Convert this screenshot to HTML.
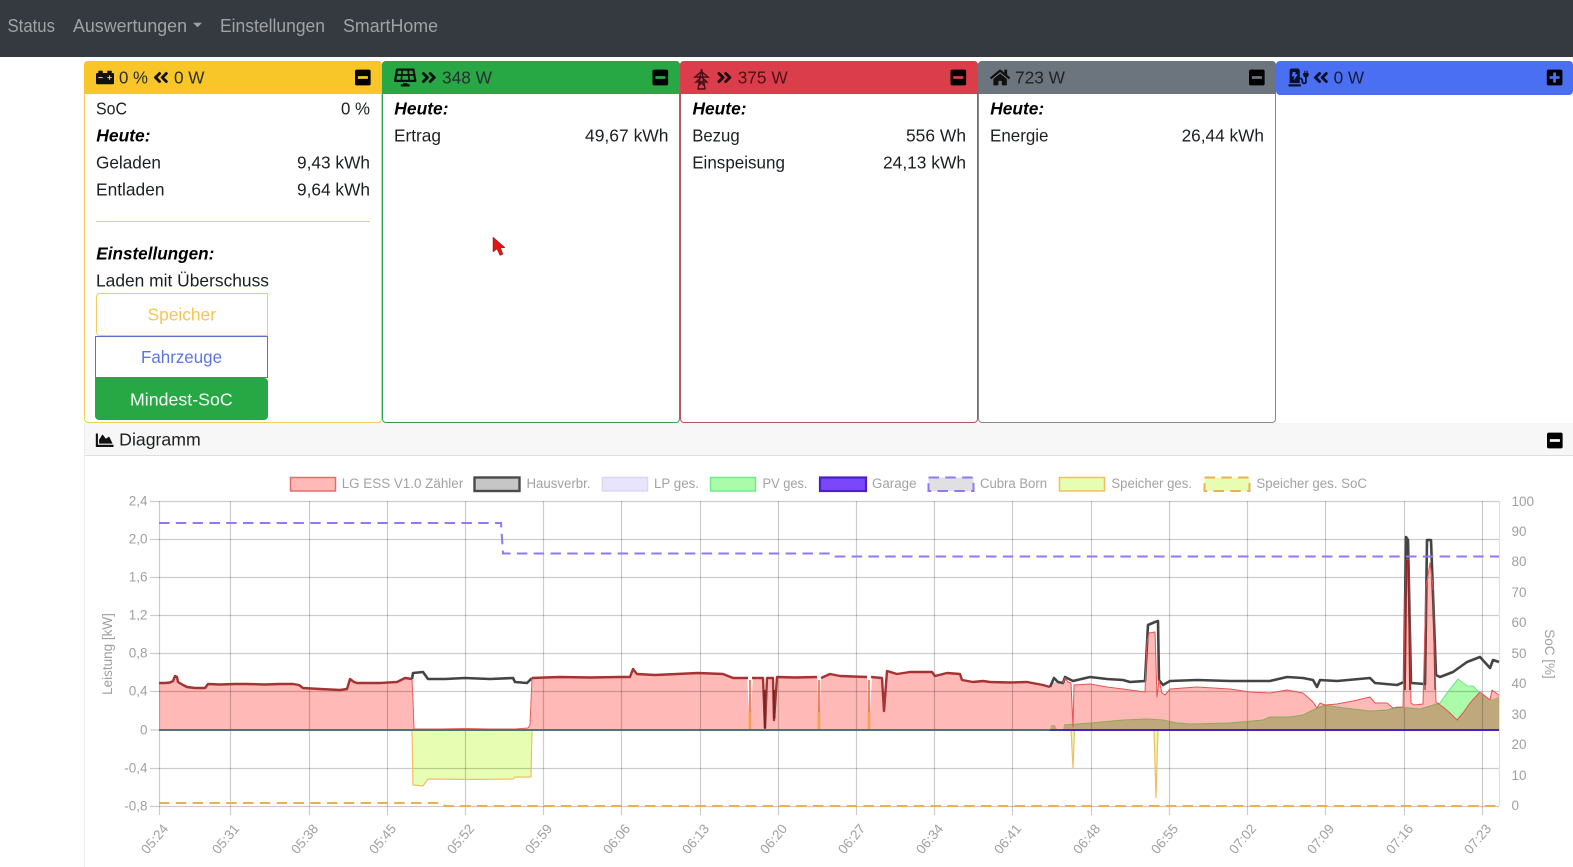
<!DOCTYPE html>
<html lang="de"><head><meta charset="utf-8"><title>openWB</title>
<style>
html,body{margin:0;padding:0;background:#fff;width:1573px;height:867px;overflow:hidden}
body{position:relative;font-family:"Liberation Sans",sans-serif}
.b{position:absolute;box-sizing:border-box}
nav{position:absolute;left:0;top:0;width:1573px;height:57px;background:#343a40}
svg.m{position:absolute;left:0;top:0}
.n{font-size:18px;fill:#a0a3a6}
.t{font-size:17.5px;fill:#1c1f22}
.h{font-size:17.5px;fill:#2a2d30}
.e{font-size:17.5px;font-weight:bold;font-style:italic;fill:#000}
.l{font-size:13.5px;fill:#a2a2a2}
.k{font-size:13.5px;fill:#a0a0a0}
</style></head><body>
<nav></nav>
<div class="b" style="left:84px;top:61px;width:298px;height:362px;border:1px solid #f3cd5c;border-radius:4px"></div>
<div class="b" style="left:84px;top:61px;width:298px;height:33px;background:#f8c628;border-radius:4px 4px 0 0"></div>
<div class="b" style="left:382px;top:61px;width:298px;height:362px;border:1px solid #32a04f;border-radius:4px"></div>
<div class="b" style="left:382px;top:61px;width:298px;height:33px;background:#28a745;border-radius:4px 4px 0 0"></div>
<div class="b" style="left:680px;top:61px;width:298px;height:362px;border:1px solid #b5525b;border-radius:4px"></div>
<div class="b" style="left:680px;top:61px;width:298px;height:33px;background:#dc3d4a;border-radius:4px 4px 0 0"></div>
<div class="b" style="left:978px;top:61px;width:298px;height:362px;border:1px solid #858a8f;border-radius:4px"></div>
<div class="b" style="left:978px;top:61px;width:298px;height:33px;background:#6c757d;border-radius:4px 4px 0 0"></div>
<div class="b" style="left:1276px;top:61px;width:297px;height:34px;background:#4a6ff2;border-radius:4px"></div>
<div class="b" style="left:96px;top:221px;width:274px;height:1px;background:#f2cd62"></div>
<div class="b" style="left:96px;top:293px;width:172px;height:43px;border:1px solid #f3cd5c;border-radius:4px 0 0 4px"></div>
<div class="b" style="left:95px;top:336px;width:173px;height:42px;border:1px solid #5874c8"></div>
<div class="b" style="left:95px;top:378px;width:173px;height:42px;background:#28a745;border-radius:0 4px 4px 4px"></div>
<div class="b" style="left:84px;top:423px;width:1489px;height:444px;border-left:1px solid #ececec"></div>
<div class="b" style="left:85px;top:423px;width:1488px;height:33px;background:#f7f7f7;border-bottom:1px solid #dedede"></div>

<svg class="m" width="1573" height="867" viewBox="0 0 1573 867" xmlns="http://www.w3.org/2000/svg">
<defs>
<path id="dl" d="M223.7 239l136-136c9.4-9.4 24.6-9.4 33.9 0l22.6 22.6c9.4 9.4 9.4 24.6 0 33.9L319.9 256l96.4 96.4c9.4 9.4 9.4 24.6 0 33.9L393.7 409c-9.4 9.4-24.6 9.4-33.9 0l-136-136c-9.5-9.4-9.5-24.6-.1-34zm-192 34l136 136c9.4 9.4 24.6 9.4 33.9 0l22.6-22.6c9.4-9.4 9.4-24.6 0-33.9L127.9 256l96.4-96.4c9.4-9.4 9.4-24.6 0-33.9L201.7 103c-9.4-9.4-24.6-9.4-33.9 0l-136 136c-9.5 9.4-9.5 24.6-.1 34z"/>
<path id="dr" d="M224.3 273l-136 136c-9.4 9.4-24.6 9.4-33.9 0l-22.6-22.6c-9.4-9.4-9.4-24.6 0-33.9l96.4-96.4-96.4-96.4c-9.4-9.4-9.4-24.6 0-33.9L54.3 103c9.4-9.4 24.6-9.4 33.9 0l136 136c9.5 9.4 9.5 24.6.1 34zm192-34l-136-136c-9.4-9.4-24.6-9.4-33.9 0l-22.6 22.6c-9.4 9.4-9.4 24.6 0 33.9l96.4 96.4-96.4 96.4c-9.4 9.4-9.4 24.6 0 33.9l22.6 22.6c9.4 9.4 24.6 9.4 33.9 0l136-136c9.4-9.2 9.4-24.4 0-33.8z"/>
<path id="mi" d="M400 32H48C21.5 32 0 53.5 0 80v352c0 26.5 21.5 48 48 48h352c26.5 0 48-21.5 48-48V80c0-26.5-21.5-48-48-48zM92 296c-6.6 0-12-5.4-12-12v-56c0-6.6 5.4-12 12-12h264c6.6 0 12 5.4 12 12v56c0 6.6-5.4 12-12 12H92z"/>
<polygon id="red" points="159,683 165,683 170,682.5 173,681 175,676 177,677 178,682 183,685 187,687 195,688 205,688 208,684 220,684.5 235,684 247,684 265,684.5 280,684 293,684 299,685 303,688 320,689 340,690 347,689 350,679 354,682 357,683 370,683 380,683 397,682 405,678 412,679 413,700 414,729 440,729 465,728.5 490,729 515,729 528,728 530,725 532,678 545,677.5 560,677 590,677.5 620,677 630,677 633,669 637,674 655,675 677,674 698,673 723,674 733,678 747,678 750,725 753,678 763,678 765,728 767,678 773,678 774,720 777,677 795,677.5 817,677 819,728 821,678 830,674 840,676 867,677 869,728 872,677 882,678 884,711 887,671 897,674 910,672 932,672 935,676 947,673 960,674 962,680 973,682 983,681 990,682 1010,682.5 1027,682 1043,685 1050,687 1053,682 1063,683 1065,678 1068,682 1071,683 1073,727 1074,685 1090,684 1107,687 1123,689 1145,692 1147,643 1149,633 1155,632 1157,697 1159,680 1162,693 1165,695 1170,689 1197,687 1230,689 1250,692 1270,693 1287,690 1303,693 1313,702 1317,708 1320,703 1325,705 1337,704 1353,701 1370,697 1375,703 1387,703 1393,708 1403,707 1406,560 1409,560 1411,703 1414,705 1423,704 1426,587 1430,563 1433,587 1436,702 1443,707 1450,713 1457,720 1463,713 1470,703 1480,692 1490,700 1492,690 1499,695 1499,730 159,730"/>
<polygon id="pv" points="1050,730 1051,725 1055,725 1057,730 1063,730 1064,725 1090,723 1123,720 1147,719 1163,720 1177,723 1190,724 1230,723 1263,720 1270,717 1290,717 1303,715 1313,710 1325,705 1337,707 1353,709 1370,711 1387,710 1397,707 1410,708 1420,709 1430,706 1440,703 1447,693 1458,679 1467,686 1473,686 1480,693 1490,700 1499,697 1499,730"/>
<clipPath id="rc"><use href="#red"/></clipPath>
</defs>

<!-- chart fills -->
<use href="#pv" fill="#aafcaa"/>
<use href="#red" fill="#ffb9b6"/>
<g clip-path="url(#rc)"><use href="#pv" fill="#bfa97c"/></g>
<polygon points="412,730 413,785 423,786 428,779 470,779.5 513,779 515,777 531,777 532,730" fill="#e7fdb1"/>
<polygon points="1071,730 1073,768 1074.5,730" fill="#e7fdb1"/>
<polygon points="1154,730 1156,798 1158,730" fill="#e7fdb1"/>

<!-- grid -->
<g stroke="#000" stroke-opacity=".2" stroke-width="1.2" fill="none">
<path d="M150 501.5H1499M150 539.5H1499M150 577.5H1499M150 615.5H1499M150 653.5H1499M150 691.5H1499M150 730H1499M150 768.5H1499M150 806.5H1499"/>
<path d="M159.5 501V815M230.5 501V815M309.5 501V815M387.5 501V815M465.5 501V815M543.5 501V815M621.5 501V815M700.5 501V815M778.5 501V815M856.5 501V815M934.5 501V815M1012.5 501V815M1091.5 501V815M1169.5 501V815M1247.5 501V815M1325.5 501V815M1404.5 501V815M1482.5 501V815"/>
<path d="M1499.5 501V806" stroke-opacity=".12"/>
</g>

<!-- series strokes -->
<polyline fill="none" stroke="#f1bf63" stroke-width="1.2" points="412,730 413,785 423,786 428,779 470,779.5 513,779 515,777 531,777 532,730"/>
<polyline fill="none" stroke="#f1bf63" stroke-width="1.2" points="1071,730 1073,768 1074.5,730"/>
<polyline fill="none" stroke="#f1bf63" stroke-width="1.2" points="1154,730 1156,798 1158,730"/>
<polyline fill="none" stroke="#8fa860" stroke-width="1.1" points="1064,725 1090,723 1123,720 1147,719 1163,720 1177,723 1190,724 1230,723 1263,720 1270,717 1290,717 1303,715 1313,710 1325,705 1337,707 1353,709 1370,711 1387,710 1397,707 1410,708 1420,709 1430,706 1440,703"/>
<polyline fill="none" stroke="#70e890" stroke-width="1.1" points="1440,703 1447,693 1458,679 1467,686 1473,686 1480,693"/>
<polyline fill="none" stroke="#444" stroke-width="2.6" stroke-linejoin="round" points="412,679 413,673 423,672 428,679 445,679 465,678 490,679 513,678 515,682 527,683 532,678"/>
<polyline fill="none" stroke="#444" stroke-width="2.6" stroke-linejoin="round" points="1050,687 1054,678 1058,682 1063,683 1065,677 1073,681 1090,677 1107,679 1123,680 1130,682 1145,681 1148,625 1155,622 1158,621 1159,680 1163,685 1170,681 1197,680 1230,681 1270,681 1287,677 1303,678 1313,680 1317,687 1320,680 1337,681 1370,678 1375,683 1397,685 1404,682 1406,537 1408,540 1411,683 1425,684 1427,540 1431,540 1436,675 1440,677 1453,672 1467,662 1480,657 1490,668 1493,660 1499,662"/>
<polyline fill="none" stroke="#ea5a5a" stroke-width="1" stroke-linejoin="round" points="412,679 413,700 414,729 440,729 465,728.5 490,729 515,729 528,728 530,725 532,678"/>
<polyline fill="none" stroke="#e85252" stroke-width="1" stroke-linejoin="round" points="1063,683 1065,678 1068,682 1071,683 1073,727 1074,685 1090,684 1107,687 1123,689 1145,692 1147,643 1149,633 1155,632 1157,697 1159,680 1162,693 1165,695 1170,689 1197,687 1230,689 1250,692 1270,693 1287,690 1303,693 1313,702 1317,708 1320,703 1325,705 1337,704 1353,701 1370,697 1375,703 1387,703 1393,708 1403,707 1406,560 1409,560 1411,703 1414,705 1423,704 1426,587 1430,563 1433,587 1436,702 1443,707 1450,713 1457,720 1463,713 1470,703 1480,692 1490,700 1492,690 1499,695"/>
<path d="M1405 690L1406.5 560M1408.5 560L1410 690" fill="none" stroke="#8c2a2a" stroke-width="1.8"/>
<path d="M1425 690L1426.5 590M1433 590L1435 690" fill="none" stroke="#8c3a3a" stroke-width="1.2"/>
<polyline fill="none" stroke="#a53333" stroke-width="2.4" stroke-linejoin="round" points="159,683 165,683 170,682.5 173,681 175,676 177,677 178,682 183,685 187,687 195,688 205,688 208,684 220,684.5 235,684 247,684 265,684.5 280,684 293,684 299,685 303,688 320,689 340,690 347,689 350,679 354,682 357,683 370,683 380,683 397,682 405,678 412,679"/>
<polyline fill="none" stroke="#a53333" stroke-width="2.4" stroke-linejoin="round" points="532,678 545,677.5 560,677 590,677.5 620,677 630,677 633,669 637,674 655,675 677,674 698,673 723,674 733,678 748,678"/>
<path d="M752 678L763 678L765 728L767 678L773 678L774 720L777 677L795 677.5L817 677M821 678L830 674L840 676L867 677M871 677L882 678L884 711L887 671L897 674L910 672L932 672L935 676L947 673L960 674L962 680L973 682L983 681L990 682L1010 682.5L1027 682L1043 685L1050 687" fill="none" stroke="#a53333" stroke-width="2.4" stroke-linejoin="round"/>
<path d="M764.5 690L765 728M774 690L774.3 718" fill="none" stroke="#6e2a2a" stroke-width="2.2"/>
<path d="M750 680V716M819 680V716M869 680V716" stroke="#e8522e" stroke-width="1.4" fill="none"/>
<path d="M750 712V730M819 712V730M869 712V730" stroke="#f4a050" stroke-width="2.5" fill="none"/>
<path d="M159 730H1050" stroke="#4f7378" stroke-width="2"/>
<path d="M1050 730H1063" stroke="#3a3aa0" stroke-width="2"/>
<path d="M1063 730H1499" stroke="#4a1fc8" stroke-width="2"/>
<polyline fill="none" stroke="#9279f2" stroke-width="2" stroke-dasharray="10.5 6.3" points="159,523 501,523 503,553.5 832,553.5 835,556.5 1499,556.5"/>
<polyline fill="none" stroke="#eab053" stroke-width="2" stroke-dasharray="10.5 6.3" points="159,803 442,803 445,806 1499,806"/>

<!-- legend -->
<rect x="290.5" y="477.5" width="45" height="13.5" fill="#ffb9b6" stroke="#ea6a6a" stroke-width="1.5"/>
<rect x="474.5" y="477.5" width="45" height="13.5" fill="#c6c6c6" stroke="#4a4a4a" stroke-width="2.4"/>
<rect x="602.5" y="477.5" width="45" height="13.5" fill="#e8e4fb" stroke="#dcd8f4" stroke-width="1.5"/>
<rect x="710.5" y="477.5" width="45" height="13.5" fill="#aafcaa" stroke="#70ea8c" stroke-width="1.5"/>
<rect x="820" y="477.5" width="46" height="13.5" fill="#7a48fa" stroke="#4a1fc8" stroke-width="2.2"/>
<rect x="928.5" y="477.5" width="45" height="13.5" fill="#e0e0e2" stroke="#9279f2" stroke-width="2" stroke-dasharray="10.5 6.3"/>
<rect x="1059.5" y="477.5" width="45" height="13.5" fill="#e7fdb1" stroke="#f1bf63" stroke-width="1.5"/>
<rect x="1204.5" y="477.5" width="45" height="13.5" fill="#e7fdb1" stroke="#eab053" stroke-width="2" stroke-dasharray="10.5 6.3"/>
<g>
<text class="l" x="341.7" y="488" textLength="121.5" lengthAdjust="spacingAndGlyphs">LG ESS V1.0 Zähler</text>
<text class="l" x="526.5" y="488" textLength="64" lengthAdjust="spacingAndGlyphs">Hausverbr.</text>
<text class="l" x="654" y="488" textLength="45" lengthAdjust="spacingAndGlyphs">LP ges.</text>
<text class="l" x="762.5" y="488" textLength="45" lengthAdjust="spacingAndGlyphs">PV ges.</text>
<text class="l" x="872" y="488" textLength="44.5" lengthAdjust="spacingAndGlyphs">Garage</text>
<text class="l" x="980" y="488" textLength="67" lengthAdjust="spacingAndGlyphs">Cubra Born</text>
<text class="l" x="1111.4" y="488" textLength="80.6" lengthAdjust="spacingAndGlyphs">Speicher ges.</text>
<text class="l" x="1256.4" y="488" textLength="110.6" lengthAdjust="spacingAndGlyphs">Speicher ges. SoC</text>
</g>

<!-- y labels -->
<g text-anchor="end">
<text class="k" x="147.5" y="505.5">2,4</text><text class="k" x="147.5" y="543.5">2,0</text><text class="k" x="147.5" y="581.5">1,6</text><text class="k" x="147.5" y="619.5">1,2</text><text class="k" x="147.5" y="657.5">0,8</text><text class="k" x="147.5" y="695.5">0,4</text><text class="k" x="147.5" y="734.5">0</text><text class="k" x="147.5" y="772.5">-0,4</text><text class="k" x="147.5" y="810.5">-0,8</text>
</g>
<g>
<text class="k" x="1511.5" y="506">100</text><text class="k" x="1511.5" y="536">90</text><text class="k" x="1511.5" y="566">80</text><text class="k" x="1511.5" y="597">70</text><text class="k" x="1511.5" y="627">60</text><text class="k" x="1511.5" y="658">50</text><text class="k" x="1511.5" y="688">40</text><text class="k" x="1511.5" y="719">30</text><text class="k" x="1511.5" y="749">20</text><text class="k" x="1511.5" y="780">10</text><text class="k" x="1511.5" y="810">0</text>
</g>
<text class="k" transform="translate(112,654) rotate(-90)" text-anchor="middle">Leistung [kW]</text>
<text class="k" transform="translate(1545,654) rotate(90)" text-anchor="middle">SoC [%]</text>

<!-- x labels -->
<g text-anchor="end">
<text class="k" transform="translate(169,829) rotate(-50)">05:24</text>
<text class="k" transform="translate(240,829) rotate(-50)">05:31</text>
<text class="k" transform="translate(319,829) rotate(-50)">05:38</text>
<text class="k" transform="translate(397,829) rotate(-50)">05:45</text>
<text class="k" transform="translate(475,829) rotate(-50)">05:52</text>
<text class="k" transform="translate(553,829) rotate(-50)">05:59</text>
<text class="k" transform="translate(631,829) rotate(-50)">06:06</text>
<text class="k" transform="translate(710,829) rotate(-50)">06:13</text>
<text class="k" transform="translate(788,829) rotate(-50)">06:20</text>
<text class="k" transform="translate(866,829) rotate(-50)">06:27</text>
<text class="k" transform="translate(944,829) rotate(-50)">06:34</text>
<text class="k" transform="translate(1022,829) rotate(-50)">06:41</text>
<text class="k" transform="translate(1101,829) rotate(-50)">06:48</text>
<text class="k" transform="translate(1179,829) rotate(-50)">06:55</text>
<text class="k" transform="translate(1257,829) rotate(-50)">07:02</text>
<text class="k" transform="translate(1335,829) rotate(-50)">07:09</text>
<text class="k" transform="translate(1414,829) rotate(-50)">07:16</text>
<text class="k" transform="translate(1492,829) rotate(-50)">07:23</text>
</g>

<!-- nav -->
<text class="n" x="7.5" y="32" textLength="47.5" lengthAdjust="spacingAndGlyphs">Status</text>
<text class="n" x="73" y="32" textLength="114" lengthAdjust="spacingAndGlyphs">Auswertungen</text>
<polygon points="193,22.7 202,22.7 197.5,27.2" fill="#a0a3a6"/>
<text class="n" x="220" y="32" textLength="105" lengthAdjust="spacingAndGlyphs">Einstellungen</text>
<text class="n" x="343" y="32" textLength="95" lengthAdjust="spacingAndGlyphs">SmartHome</text>

<!-- card 1 header -->
<svg x="96" y="68.5" width="18" height="18" viewBox="0 0 512 512"><path fill="#111" d="M480 128h-32V80c0-8.84-7.16-16-16-16h-96c-8.84 0-16 7.16-16 16v48H192V80c0-8.84-7.16-16-16-16H80c-8.84 0-16 7.16-16 16v48H32c-17.67 0-32 14.33-32 32v256c0 17.67 14.33 32 32 32h448c17.67 0 32-14.33 32-32V160c0-17.67-14.33-32-32-32zM192 264c0 4.42-3.58 8-8 8H72c-4.42 0-8-3.58-8-8v-16c0-4.42 3.58-8 8-8h112c4.42 0 8 3.58 8 8v16zm256 0c0 4.42-3.58 8-8 8h-40v40c0 4.42-3.58 8-8 8h-16c-4.42 0-8-3.58-8-8v-40h-40c-4.42 0-8-3.58-8-8v-16c0-4.42 3.58-8 8-8h40v-40c0-4.42 3.58-8 8-8h16c4.42 0 8 3.58 8 8v40h40c4.42 0 8 3.58 8 8v16z"/></svg>
<text class="h" x="119" y="83.5" textLength="29" lengthAdjust="spacingAndGlyphs">0 %</text>
<svg x="153" y="68.5" width="15.75" height="18" viewBox="0 0 448 512"><use href="#dl" fill="#111"/></svg>
<text class="h" x="174" y="83.5" textLength="30.5" lengthAdjust="spacingAndGlyphs">0 W</text>
<svg x="355" y="68.5" width="15.75" height="18" viewBox="0 0 448 512"><use href="#mi" fill="#000"/></svg>

<!-- card 1 body -->
<text class="t" x="96" y="114.5" textLength="31" lengthAdjust="spacingAndGlyphs">SoC</text>
<text class="t" x="341" y="114.5" textLength="29" lengthAdjust="spacingAndGlyphs">0 %</text>
<text class="e" x="96.3" y="141.5" textLength="54.2" lengthAdjust="spacingAndGlyphs">Heute:</text>
<text class="t" x="96" y="168.5" textLength="65" lengthAdjust="spacingAndGlyphs">Geladen</text>
<text class="t" x="297" y="168.5" textLength="73" lengthAdjust="spacingAndGlyphs">9,43 kWh</text>
<text class="t" x="96" y="195.5" textLength="68.5" lengthAdjust="spacingAndGlyphs">Entladen</text>
<text class="t" x="297" y="195.5" textLength="73" lengthAdjust="spacingAndGlyphs">9,64 kWh</text>
<text class="e" x="96.3" y="259.5" textLength="118" lengthAdjust="spacingAndGlyphs">Einstellungen:</text>
<text class="t" x="96" y="286.5" textLength="173" lengthAdjust="spacingAndGlyphs">Laden mit Überschuss</text>
<text class="t" style="fill:#f0c659" x="147.5" y="320.7" textLength="68.5" lengthAdjust="spacingAndGlyphs">Speicher</text>
<text class="t" style="fill:#5d75e0" x="141" y="363" textLength="81" lengthAdjust="spacingAndGlyphs">Fahrzeuge</text>
<text class="t" style="fill:#f4fff6" x="130" y="405.6" textLength="102.7" lengthAdjust="spacingAndGlyphs">Mindest-SoC</text>

<!-- card 2 -->
<svg x="394" y="68.5" width="22.5" height="18" viewBox="0 0 640 512"><path fill="#111" d="M431.98 448.01l-47.97.05V416h-128v32.21l-47.98.05c-8.82.01-15.97 7.16-15.98 15.99l-.05 31.73c-.01 8.85 7.17 16.03 16.02 16.02l223.96-.26c8.82-.01 15.97-7.16 15.98-15.98l.04-31.73c.01-8.85-7.17-16.03-16.02-16.02zM585.2 26.74C582.58 11.31 568.99 0 553.06 0H86.93C71 0 57.41 11.31 54.79 26.74-3.32 369.16.04 348.08.03 352c-.03 17.32 14.29 32 32.6 32h574.74c18.23 0 32.51-14.56 32.59-31.79.02-4.08 3.35 16.95-54.76-325.47zM259.83 64h120.33l9.77 96H250.06l9.77-96zm-75.17 256H71.09L90.1 208h105.97l-11.41 112zm16.29-160H98.24l16.29-96h96.19l-9.77 96zm32.82 160l11.4-112h149.65l11.4 112H233.77zm195.5-256h96.19l16.29 96H439.04l-9.77-96zm26.06 256l-11.4-112H549.9l19 112H455.33z"/></svg>
<svg x="421" y="68.5" width="15.75" height="18" viewBox="0 0 448 512"><use href="#dr" fill="#111"/></svg>
<text class="h" x="442" y="83.5" textLength="50" lengthAdjust="spacingAndGlyphs">348 W</text>
<svg x="652.5" y="68.5" width="15.75" height="18" viewBox="0 0 448 512"><use href="#mi" fill="#000"/></svg>
<text class="e" x="394.3" y="114.5" textLength="54.2" lengthAdjust="spacingAndGlyphs">Heute:</text>
<text class="t" x="394" y="141.5" textLength="47" lengthAdjust="spacingAndGlyphs">Ertrag</text>
<text class="t" x="585" y="141.5" textLength="83.5" lengthAdjust="spacingAndGlyphs">49,67 kWh</text>

<!-- card 3 -->
<path d="M701.5 69L698 89M701.5 69L705 89M695 77L701.5 71.5L708 77ZM696 82L701.5 77L707 82ZM699 80L704.5 86M704 80L698.5 86M697.5 89L705.5 89" fill="none" stroke="#4c0f15" stroke-width="1.4"/>
<svg x="716.5" y="68.5" width="15.75" height="18" viewBox="0 0 448 512"><use href="#dr" fill="#1a0506"/></svg>
<text class="h" style="fill:#4c1118" x="737.7" y="83.5" textLength="50" lengthAdjust="spacingAndGlyphs">375 W</text>
<svg x="950.5" y="68.5" width="15.75" height="18" viewBox="0 0 448 512"><use href="#mi" fill="#000"/></svg>
<text class="e" x="692.5" y="114.5" textLength="54" lengthAdjust="spacingAndGlyphs">Heute:</text>
<text class="t" x="692.2" y="141.5" textLength="47.5" lengthAdjust="spacingAndGlyphs">Bezug</text>
<text class="t" x="906" y="141.5" textLength="60" lengthAdjust="spacingAndGlyphs">556 Wh</text>
<text class="t" x="692.2" y="168.5" textLength="92.8" lengthAdjust="spacingAndGlyphs">Einspeisung</text>
<text class="t" x="883" y="168.5" textLength="83" lengthAdjust="spacingAndGlyphs">24,13 kWh</text>

<!-- card 4 -->
<svg x="990" y="68.5" width="20.25" height="18" viewBox="0 0 576 512"><path fill="#111" d="M280.37 148.26L96 300.11V464a16 16 0 0 0 16 16l112.06-.29a16 16 0 0 0 15.92-16V368a16 16 0 0 1 16-16h64a16 16 0 0 1 16 16v95.64a16 16 0 0 0 16 16.05L464 480a16 16 0 0 0 16-16V300L295.67 148.26a12.19 12.19 0 0 0-15.3 0zM571.6 251.47L488 182.56V44.05a12 12 0 0 0-12-12h-56a12 12 0 0 0-12 12v72.61L318.47 43a48 48 0 0 0-61 0L4.34 251.47a12 12 0 0 0-1.6 16.9l25.5 31A12 12 0 0 0 45.15 301l235.22-193.74a12.19 12.19 0 0 1 15.3 0L530.9 301a12 12 0 0 0 16.9-1.6l25.5-31a12 12 0 0 0-1.7-16.93z"/></svg>
<text class="h" style="fill:#1e2226" x="1015" y="83.5" textLength="50" lengthAdjust="spacingAndGlyphs">723 W</text>
<svg x="1249" y="68.5" width="15.75" height="18" viewBox="0 0 448 512"><use href="#mi" fill="#000"/></svg>
<text class="e" x="990.2" y="114.5" textLength="54" lengthAdjust="spacingAndGlyphs">Heute:</text>
<text class="t" x="990" y="141.5" textLength="58.5" lengthAdjust="spacingAndGlyphs">Energie</text>
<text class="t" x="1181.6" y="141.5" textLength="82.4" lengthAdjust="spacingAndGlyphs">26,44 kWh</text>

<!-- card 5 -->
<svg x="1288.5" y="68.5" width="20.25" height="18" viewBox="0 0 576 512"><path fill="#0a0f2a" d="M336 448H16c-8.84 0-16 7.16-16 16v32c0 8.84 7.16 16 16 16h320c8.84 0 16-7.16 16-16v-32c0-8.84-7.16-16-16-16zm208-320V80c0-8.84-7.16-16-16-16s-16 7.16-16 16v48h-32V80c0-8.84-7.16-16-16-16s-16 7.16-16 16v48h-16c-8.84 0-16 7.16-16 16v32c0 35.76 23.62 65.69 56 75.93v118.49c0 13.95-9.5 26.92-23.26 29.19C431.22 402.5 416 388.99 416 372v-28c0-48.6-39.4-88-88-88h-8V64c0-35.35-28.65-64-64-64H96C60.65 0 32 28.65 32 64v352h288V304h8c22.09 0 40 17.91 40 40v24.61c0 39.67 28.92 75.16 68.41 79C481.71 452.05 520 416.41 520 372V251.93c32.38-10.24 56-40.17 56-75.93v-32c0-8.84-7.16-16-16-16zM260 175l-94 139c-2 3-6 5-10 5-8 0-13-6-12-13l25-82h-57c-7 0-13-6-12-12l16-104c1-5 6-9 12-9h64c8 0 14 7 12 14l-15 52h56c9 0 15 8 15 10z"/></svg>
<svg x="1313" y="68.5" width="15.75" height="18" viewBox="0 0 448 512"><use href="#dl" fill="#0a0f2a"/></svg>
<text class="h" style="fill:#141c3c" x="1333.6" y="83.5" textLength="30.5" lengthAdjust="spacingAndGlyphs">0 W</text>
<svg x="1546.7" y="68.5" width="15.75" height="18" viewBox="0 0 448 512"><path fill="#000" d="M400 32H48C21.5 32 0 53.5 0 80v352c0 26.5 21.5 48 48 48h352c26.5 0 48-21.5 48-48V80c0-26.5-21.5-48-48-48zm-32 252c0 6.6-5.4 12-12 12h-92v92c0 6.6-5.4 12-12 12h-56c-6.6 0-12-5.4-12-12v-92H92c-6.6 0-12-5.4-12-12v-56c0-6.6 5.4-12 12-12h92v-92c0-6.6 5.4-12 12-12h56c6.6 0 12 5.4 12 12v92h92c6.6 0 12 5.4 12 12v56z"/></svg>

<!-- Diagramm header -->
<svg x="95.7" y="431.2" width="18" height="18" viewBox="0 0 512 512"><path fill="#111" d="M500 384c6.6 0 12 5.4 12 12v40c0 6.6-5.4 12-12 12H12c-6.6 0-12-5.4-12-12V76c0-6.6 5.4-12 12-12h40c6.6 0 12 5.4 12 12v308h436zM372.7 159.5L288 216l-85.3-113.7c-5.1-6.8-15.5-6.3-19.9 1L96 248v104h384l-89.9-187.8c-3.2-6.5-11.4-8.7-17.4-4.7z"/></svg>
<text class="t" x="119.2" y="445.5" textLength="81.5" lengthAdjust="spacingAndGlyphs">Diagramm</text>
<svg x="1547" y="431.5" width="15.75" height="18" viewBox="0 0 448 512"><use href="#mi" fill="#000"/></svg>

<!-- cursor -->
<polygon points="493,237 493,252 497,249 500,255.5 503,254 500.5,248 505,247.5" fill="#e01515" stroke="#7a1a1a" stroke-width=".5"/>
</svg>
</body></html>
